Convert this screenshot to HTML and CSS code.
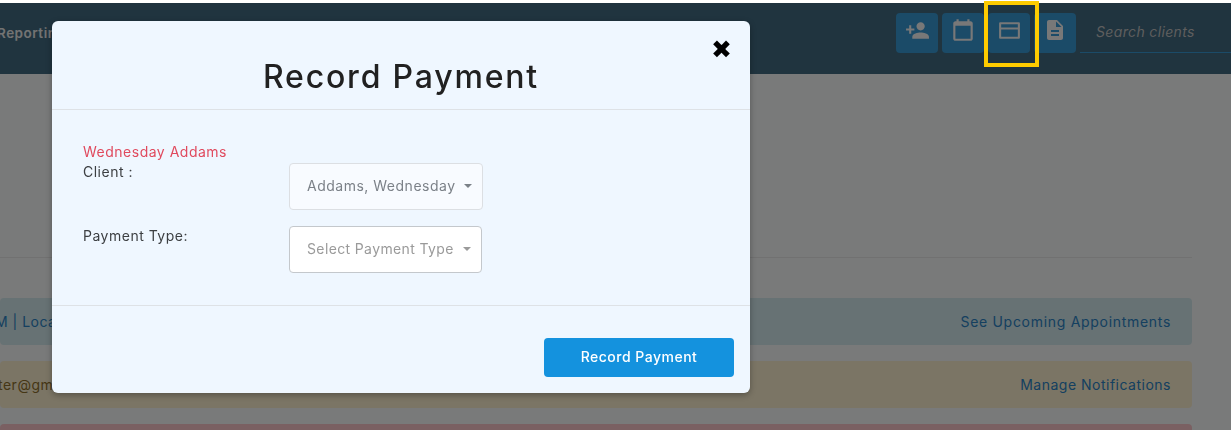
FILE: index.html
```html
<!DOCTYPE html>
<html lang="en">
<head>
<meta charset="utf-8">
<title>Record Payment</title>
<link rel="stylesheet" href="styles.css">
</head>
<body>
<div class="page">
  <header class="topbar">
    <div class="nav-clip"><span class="nav-link">Reporting</span></div>
    <div class="actions">
      <button class="icon-btn" aria-label="Add client"><svg viewBox="0 0 24 24" width="25" height="25"><path fill="currentColor" d="M15 12c2.200 0 4-1.800 4-4s-1.800-4-4-4-4 1.800-4 4 1.800 4 4 4zm-9-2V7H4v3H1v2h3v3h2v-3h3v-2H6zm9 4c-2.700 0-8 1.300-8 4v2h16v-2c0-2.700-5.300-4-8-4z"/></svg></button>
      <button class="icon-btn" aria-label="Calendar"><svg viewBox="0 0 24 24" width="26" height="26"><path fill="currentColor" d="M19 4h-1V2h-2v2H8V2H6v2H5c-1.100 0-2 .9-2 2v14c0 1.100.9 2 2 2h14c1.100 0 2-.9 2-2V6c0-1.100-.9-2-2-2zm0 16H5V8h14v12z"/></svg></button>
      <button class="icon-btn" aria-label="Payment"><svg viewBox="0 0 24 24" width="25" height="25"><path fill="currentColor" fill-rule="evenodd" d="M3 4h18a1 1 0 0 1 1 1v14a1 1 0 0 1-1 1H3a1 1 0 0 1-1-1V5a1 1 0 0 1 1-1zm1 2v3h16V6H4zm0 5v7h16v-7H4z"/></svg></button>
      <button class="icon-btn" aria-label="Document"><svg viewBox="0 0 24 24" width="24" height="24"><path fill="currentColor" d="M14 2H6c-1.100 0-2 .9-2 2v16c0 1.100.9 2 2 2h12c1.100 0 2-.9 2-2V8l-6-6zm2 16H8v-2h8v2zm0-4H8v-2h8v2zm-3-5V3.500L18.500 9H13z"/></svg></button>
      <div class="search">Search clients</div>
    </div>
  </header>
  <main class="content">
    <hr class="rule">
    <div class="alert alert-info"><span>M | Location</span><a>See Upcoming Appointments</a></div>
    <div class="alert alert-warn"><span>ter@gmail.com</span><a>Manage Notifications</a></div>
    <div class="alert alert-danger"></div>
  </main>
</div>
<div class="backdrop"></div>
<div class="highlight"></div>
<section class="modal">
  <div class="modal-head">
    <h1>Record Payment</h1>
    <span class="close">✖</span>
  </div>
  <div class="modal-body">
    <div class="client-name">Wednesday Addams</div>
    <div class="form-row">
      <label class="label-client">Client :</label>
      <div class="select select-client"><span>Addams, Wednesday</span><i class="caret"></i></div>
    </div>
    <div class="form-row">
      <label>Payment Type:</label>
      <div class="select select-type"><span>Select Payment Type</span><i class="caret"></i></div>
    </div>
  </div>
  <div class="modal-foot"><button class="primary">Record Payment</button></div>
</section>
</body>
</html>
```
FILE: styles.css
```css
* { box-sizing: border-box; }
html, body { margin: 0; height: 100%; overflow: hidden; }
body { font-family: Inter, "Open Sans", sans-serif; font-size: 14px; letter-spacing: .5px; color: #212529; background: #f3f4f5; }
.page { height: 430px; overflow: hidden; border-top: 3px solid #fff; }
.topbar { height: 71px; background: #41687e; display: flex; justify-content: space-between; }
.nav-clip { width: 60px; padding-top: 21px; margin-left: -3px; white-space: nowrap; }
.nav-link { font-weight: 600; font-size: 13.500px; color: #e6e6e6; }
.actions { display: flex; align-items: flex-start; padding-top: 10px; }
.icon-btn { width: 42px; height: 40px; margin-right: 4px; border: 0; border-radius: 4px; background: #3696d0; color: #f0f0f0; padding: 0 0 6px; display: flex; align-items: center; justify-content: center; }
.search { width: 151px; height: 40px; padding: 10px 0 0 16px; font-style: italic; letter-spacing: .35px; color: #bcbcbc; border-bottom: 1px solid #3696d0; }
.content { padding: 0 39px 0 0; }
.rule { margin: 183px 0 40px; border: 0; border-top: 1px solid #e2e2e2; }
.alert { height: 47px; margin-bottom: 16px; border: 1px solid transparent; border-radius: 4px; display: flex; justify-content: space-between; align-items: center; padding: 0 20px 0 0; }
.alert a { color: #2a80c0; }
.alert span { margin-left: -6px; }
.alert-info { background: #cee4e8; color: #2a80c0; }
.alert-info a { letter-spacing: .7px; }
.alert-warn { background: #f6eaca; color: #8a6d2c; }
.alert-warn span { margin-left: -3px; }
.alert-danger { background: #f4c0c4; }
.backdrop { position: fixed; inset: 3px 0 0; background: rgba(0, 0, 0, .5); }
.highlight { position: absolute; left: 984px; top: 1px; width: 55px; height: 66px; border: 4px solid #ffcc00; }
.modal { position: absolute; left: 52px; top: 21px; width: 698px; height: 372px; background: #eff7ff; border-radius: 6px; box-shadow: 0 2px 6px rgba(0, 0, 0, .3); display: flex; flex-direction: column; }
.modal-head { height: 89px; border-bottom: 1px solid #dee2e6; position: relative; }
.modal-head h1 { margin: 0; padding-top: 36px; text-align: center; font-size: 32px; line-height: 40px; font-weight: 500; letter-spacing: 1.800px; color: #212121; }
.close { position: absolute; right: 18px; top: 15px; font-size: 25px; line-height: 28px; letter-spacing: 0; color: #000; font-family: "DejaVu Sans", sans-serif; }
.modal-body { height: 196px; padding: 32px 31px 0; border-bottom: 1px solid #dee2e6; }
.client-name { color: #e04a5e; line-height: 20px; height: 21px; }
.form-row { display: flex; margin-bottom: 16px; }
.form-row label { width: 206px; line-height: 20px; color: #3c3f42; }
.form-row .label-client { margin-top: -1px; }
.select { height: 47px; border: 1px solid #ced4da; border-radius: 4px; background: #fff; display: flex; align-items: center; padding: 0 10px 2px 17px; justify-content: space-between; white-space: nowrap; }
.select-client { width: 194px; color: #7b8188; border-color: #dcdfe3; background: #f8fbff; }
.select-type { width: 193px; color: #9a9a9a; border-color: #c4c8cc; letter-spacing: .37px; }
.caret { border: 4px solid transparent; border-top-color: currentColor; border-bottom: 0; width: 0; height: 0; }
.modal-foot { flex: 1; display: flex; justify-content: flex-end; align-items: flex-start; padding: 32px 16px 0 0; }
.primary { width: 190px; height: 39px; border: 0; border-radius: 4px; background: #1492de; color: #fff; padding: 0 0 2px; font: 500 14px Inter, sans-serif; letter-spacing: .5px; }
```
